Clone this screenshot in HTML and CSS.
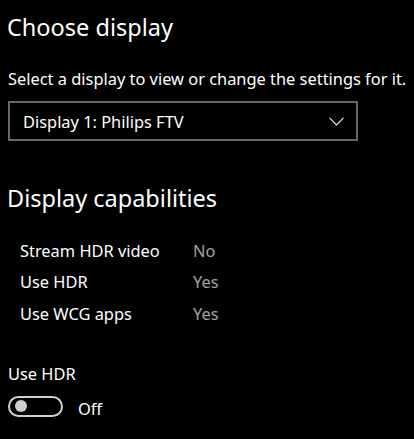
FILE: index.html
```html
<!DOCTYPE html>
<html lang="en">
<head>
<meta charset="utf-8">
<title>Display</title>
<link rel="stylesheet" href="styles.css">
</head>
<body>
<main class="page">
  <h1 class="title">Choose display</h1>
  <p class="sub">Select a display to view or change the settings for it.</p>
  <div class="dropdown">
    <span class="dropdown-text">Display 1: Philips FTV</span>
    <svg class="chevron" width="15" height="9" viewBox="0 0 15 9" aria-hidden="true">
      <polyline points="0.5,0.8 7.5,7.8 14.5,0.8" fill="none" stroke="#e6e6e6" stroke-width="1.2"/>
    </svg>
  </div>
  <h2 class="title section">Display capabilities</h2>
  <div class="caps">
    <span class="cap-label">Stream HDR video</span><span class="cap-value">No</span>
    <span class="cap-label">Use HDR</span><span class="cap-value">Yes</span>
    <span class="cap-label">Use WCG apps</span><span class="cap-value">Yes</span>
  </div>
  <div class="toggle-label">Use HDR</div>
  <div class="toggle-row">
    <span class="toggle"><span class="thumb"></span></span>
    <span class="toggle-state">Off</span>
  </div>
</main>
</body>
</html>
```
FILE: styles.css
```css
html, body {
  margin: 0;
  background: #000;
}
body {
  color: #fff;
  font-family: "Noto Sans", "Open Sans", sans-serif;
  font-size: 16.4px;
  line-height: 20px;
}
.page {
  padding: 0 8px;
}
.title {
  margin: 0;
  font-weight: 400;
  font-size: 23.5px;
  line-height: 28px;
  padding-top: 13px;
  margin-left: -1px;
}
.sub {
  margin: 27.5px 0 0;
  white-space: nowrap;
}
.dropdown {
  box-sizing: border-box;
  margin-top: 12.5px;
  width: 350px;
  height: 40px;
  border: 2px solid #666;
  display: flex;
  align-items: center;
  justify-content: space-between;
  padding: 2px 12px 0 13px;
}
.chevron {
  display: block;
  margin-top: -2px;
}
.section {
  padding-top: 0;
  margin-top: 42.6px;
}
.caps {
  margin-top: 23.2px;
  padding-left: 12px;
  display: grid;
  grid-template-columns: 173px auto;
  line-height: 31.5px;
}
.cap-value {
  color: #a2a2a2;
}
.toggle-label {
  margin-top: 34.3px;
}
.toggle-row {
  margin-top: 12.4px;
  display: flex;
  align-items: center;
  gap: 15px;
}
.toggle {
  box-sizing: border-box;
  width: 55px;
  height: 21px;
  border: 2px solid #cfcfcf;
  border-radius: 11px;
  display: flex;
  align-items: center;
  padding-left: 5px;
}
.thumb {
  width: 12px;
  height: 12px;
  border-radius: 50%;
  background: #cfcfcf;
}
.toggle-state {
  position: relative;
  top: 3px;
}
```
